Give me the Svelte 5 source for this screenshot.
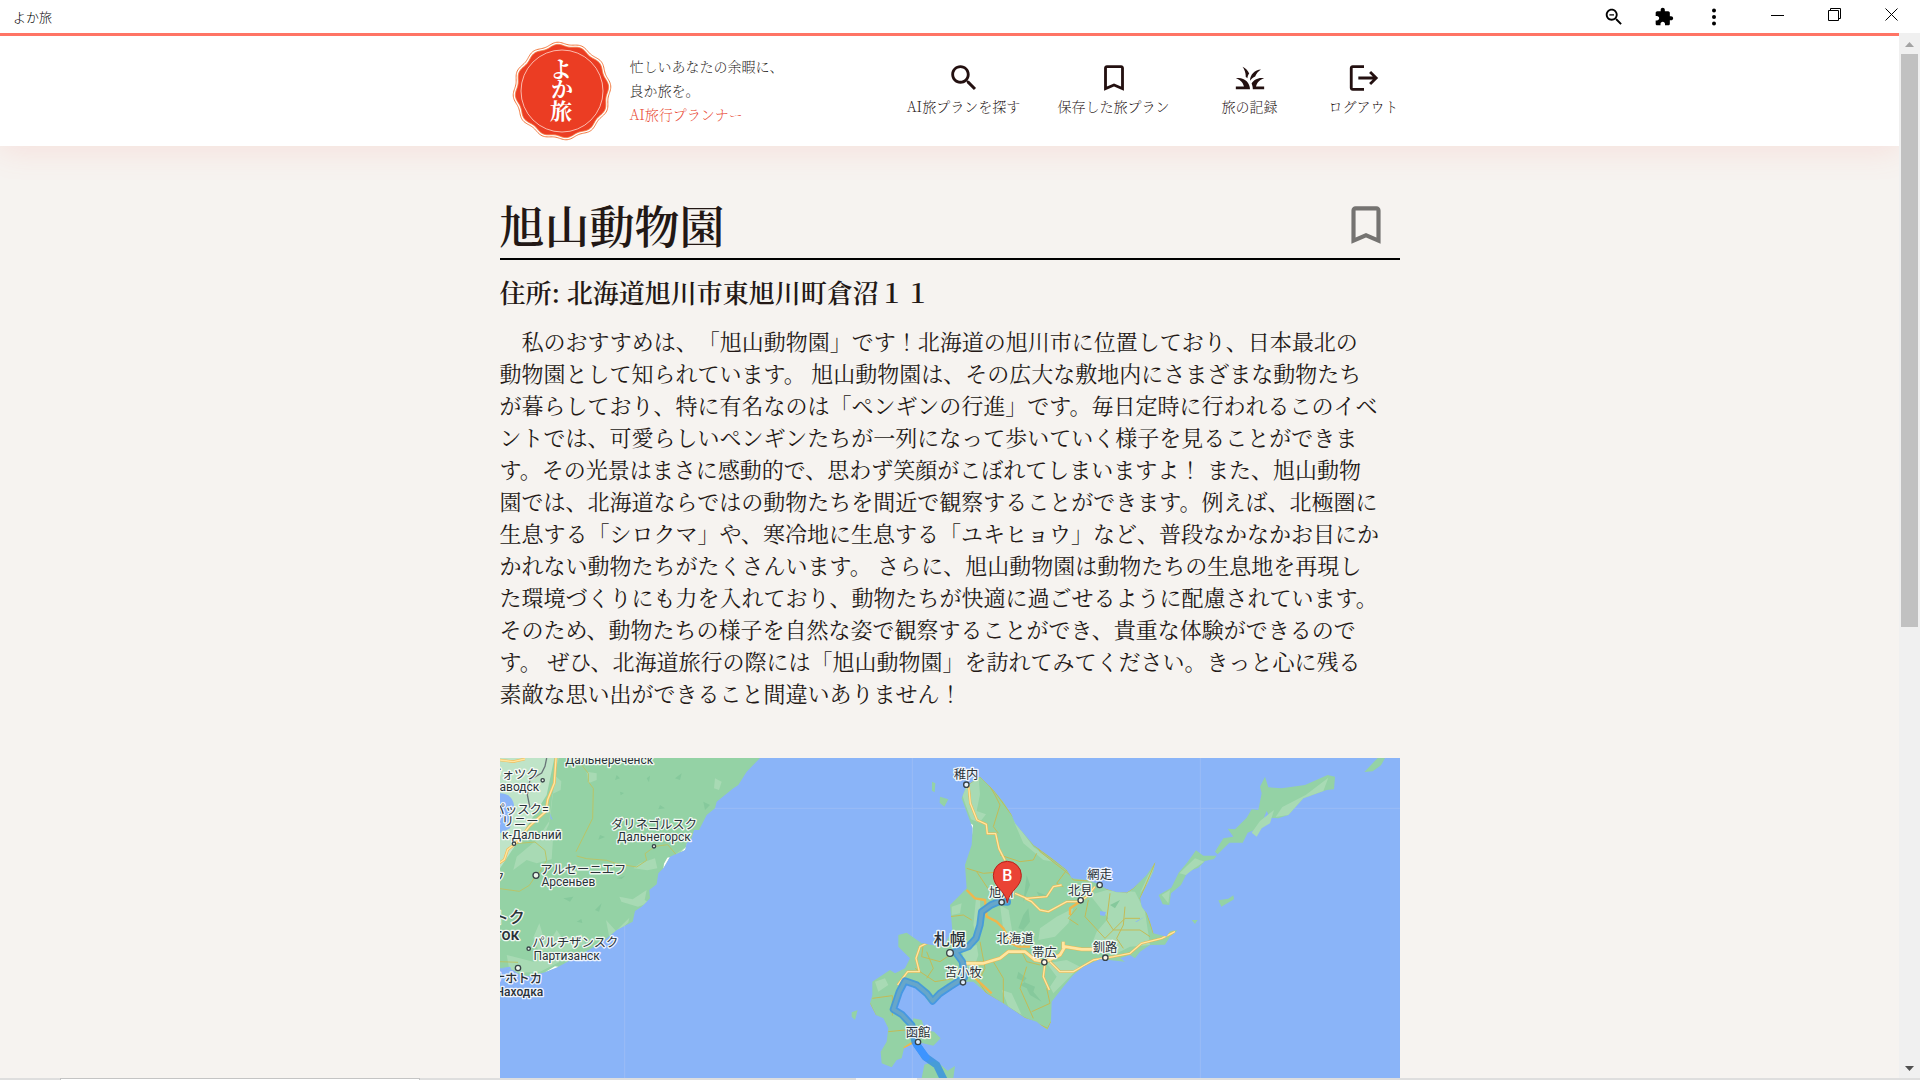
<script>
  const introduction = [
    '　私のおすすめは、「旭山動物園」です！北海道の旭川市に位置しており、日本最北の',
    '動物園として知られています。 旭山動物園は、その広大な敷地内にさまざまな動物たち',
    'が暮らしており、特に有名なのは「ペンギンの行進」です。毎日定時に行われるこのイベ',
    'ントでは、可愛らしいペンギンたちが一列になって歩いていく様子を見ることができま',
    'す。その光景はまさに感動的で、思わず笑顔がこぼれてしまいますよ！ また、旭山動物',
    '園では、北海道ならではの動物たちを間近で観察することができます。例えば、北極圏に',
    '生息する「シロクマ」や、寒冷地に生息する「ユキヒョウ」など、普段なかなかお目にか',
    'かれない動物たちがたくさんいます。 さらに、旭山動物園は動物たちの生息地を再現し',
    'た環境づくりにも力を入れており、動物たちが快適に過ごせるように配慮されています。',
    'そのため、動物たちの様子を自然な姿で観察することができ、貴重な体験ができるので',
    'す。 ぜひ、北海道旅行の際には「旭山動物園」を訪れてみてください。きっと心に残る',
    '素敵な思い出ができること間違いありません！'
  ].join('\n');

  const bookmark =
    'M17 3H7c-1.1 0-1.99.9-1.99 2L5 21l7-3 7 3V5c0-1.1-.9-2-2-2zm0 15l-5-2.18L7 18V5h10v13z';

  const links = [
    {
      label: 'AI旅プランを探す',
      icon: 'M15.5 14h-.79l-.28-.27C15.41 12.59 16 11.11 16 9.5 16 5.91 13.09 3 9.5 3S3 5.91 3 9.5 5.91 16 9.5 16c1.61 0 3.09-.59 4.23-1.57l.27.28v.79l5 4.99L20.49 19l-4.99-5zm-6 0C7.01 14 5 11.99 5 9.5S7.01 5 9.5 5 14 7.01 14 9.5 11.99 14 9.5 14z'
    },
    { label: '保存した旅プラン', icon: bookmark },
    {
      label: '旅の記録',
      icon: 'M12 20H2v-2h5.75C7.02 15.19 4.81 12.99 2 12.26C2.64 12.1 3.31 12 4 12C8.42 12 12 15.58 12 20z M22 12.26c-.64-.16-1.31-.26-2-.26c-2.93 0-5.48 1.58-6.88 3.93c.29.66.53 1.35.67 2.07c.13.65.2 1.32.2 2h8v-2h-5.75C16.98 15.19 19.19 12.99 22 12.26z M15.64 11.02c.78-2.09 2.23-3.84 4.09-5C15.44 6.16 12 9.67 12 14v.02C12.95 12.75 14.2 11.72 15.64 11.02z M11.42 8.85C10.58 6.66 8.88 4.89 6.7 4C8.14 5.86 9 8.18 9 10.71c0 .21-.03.41-.04.61c.43.24.83.52 1.22.82C10.24 10.98 10.68 9.82 11.42 8.85z'
    },
    {
      label: 'ログアウト',
      icon: 'M17 7l-1.41 1.41L18.17 11H8v2h10.17l-2.58 2.58L17 17l5-5zM4 5h8V3H4c-1.1 0-2 .9-2 2v14c0 1.1.9 2 2 2h8v-2H4V5z'
    }
  ];

  function scallop(radius, depth) {
    const points = [];
    for (let i = 0; i < 240; i++) {
      const a = (i / 240) * Math.PI * 2;
      const r = radius + depth * Math.cos(12 * (a + 1.68));
      points.push(`${(50 + r * Math.cos(a)).toFixed(2)} ${(50 + r * Math.sin(a)).toFixed(2)}`);
    }
    return 'M' + points.join('L') + 'Z';
  }

  const places = [
    { x: 328, y: 28, t: 'Дальнереченск', ru: true },
    { x: 116, y: 72, t: 'ヴォツク', end: true },
    { x: 118, y: 109, t: 'аводск', ru: true, end: true },
    { x: 146, y: 176, t: 'パッスク=', end: true },
    { x: 116, y: 214, t: 'ダリニー', end: true },
    { x: 185, y: 251, t: 'к-Дальний', ru: true, end: true },
    { x: 462, y: 222, t: 'ダリネゴルスク' },
    { x: 462, y: 259, t: 'Дальнегорск', ru: true },
    { x: 250, y: 356, t: 'アルセーニエフ' },
    { x: 205, y: 393, t: 'Арсеньев', ru: true },
    { x: 14, y: 380, t: 'ク', end: true },
    { x: 226, y: 577, t: 'パルチザンスク' },
    { x: 200, y: 614, t: 'Партизанск', ru: true },
    { x: 126, y: 685, t: 'ナホトカ', end: true, strong: true },
    { x: 130, y: 722, t: 'Находка', ru: true, end: true, strong: true },
    { x: 1398, y: 71, t: '稚内' },
    { x: 1799, y: 372, t: '網走' },
    { x: 1741, y: 419, t: '北見' },
    { x: 1504, y: 426, t: '旭川' },
    { x: 1545, y: 563, t: '北海道' },
    { x: 1633, y: 605, t: '帯広' },
    { x: 1815, y: 592, t: '釧路' },
    { x: 1390, y: 666, t: '苫小牧' },
    { x: 1254, y: 845, t: '函館' }
  ];

  const cities = [
    [128, 76, 5], [42, 266, 5], [462, 274, 5], [108, 361, 9], [86, 581, 5], [54, 639, 8],
    [1399, 89, 8], [1799, 390, 8], [1742, 436, 8], [1505, 442, 8], [1633, 622, 8],
    [1816, 608, 8], [1350, 594, 10], [1389, 682, 8], [1254, 861, 8]
  ];
</script>

<div class="window">
  <header class="titlebar">
    <span class="app-name">よか旅</span>
    <button class="tool" aria-label="縮小">
      <svg width="22" height="22" viewBox="0 0 24 24"><path d={links[0].icon} /><path d="M7 9h5v1.4H7z" /></svg>
    </button>
    <button class="tool" aria-label="拡張機能">
      <svg width="20" height="20" viewBox="0 0 24 24"><path d="M20.5 11H19V7c0-1.1-.9-2-2-2h-4V3.5C13 2.12 11.88 1 10.5 1S8 2.12 8 3.5V5H4c-1.1 0-1.99.9-1.99 2v3.8H3.5c1.49 0 2.7 1.21 2.7 2.7s-1.21 2.7-2.7 2.7H2V20c0 1.1.9 2 2 2h3.8v-1.5c0-1.49 1.21-2.7 2.7-2.7 1.49 0 2.7 1.21 2.7 2.7V22H17c1.1 0 2-.9 2-2v-4h1.5c1.38 0 2.5-1.12 2.5-2.5S21.88 11 20.5 11z" /></svg>
    </button>
    <button class="tool" aria-label="メニュー">
      <svg width="20" height="20" viewBox="0 0 20 20"><circle cx="10" cy="3.5" r="2" /><circle cx="10" cy="10" r="2" /><circle cx="10" cy="16.5" r="2" /></svg>
    </button>
    <span class="controls">
      <button class="control" aria-label="最小化">
        <svg width="14" height="14" viewBox="0 0 14 14"><path class="thin" d="M0 7.5h13" /></svg>
      </button>
      <button class="control" aria-label="元に戻す">
        <svg width="14" height="14" viewBox="0 0 14 14"><path class="thin" d="M.5 2.5h10v10H.5zM2.5 2.5V.5h10v10h-2" /></svg>
      </button>
      <button class="control" aria-label="閉じる">
        <svg width="14" height="14" viewBox="0 0 14 14"><path class="thin" d="M.5 .5l12 12M12.5 .5l-12 12" /></svg>
      </button>
    </span>
  </header>

  <div class="viewport">
    <div class="page">
      <div class="site-header">
        <div class="header-inner">
          <a class="brand" href="#top" aria-label="よか旅">
            <svg width="100" height="100" viewBox="0 0 100 100">
              <path d={scallop(47.8, 1.2)} fill="#fff" stroke="#f2793f" stroke-width="1" />
              <path d={scallop(45.6, 1.2)} fill="#eb3d23" stroke="#f2793f" stroke-width=".8" />
              <circle cx="50" cy="50" r="41" fill="none" stroke="#ffd9cf" stroke-width=".8" />
              <g class="seal">
                <text x="49" y="36">よ</text>
                <text x="50" y="56">か</text>
                <text x="49" y="78">旅</text>
              </g>
            </svg>
          </a>
          <p class="tagline">忙しいあなたの余暇に、<br />良か旅を。<br /><span>AI旅行プランナー</span></p>
          <nav>
            {#each links as link}
              <a href="#top">
                <svg width="34" height="34" viewBox="0 0 24 24"><path d={link.icon} /></svg>
                <span>{link.label}</span>
              </a>
            {/each}
          </nav>
        </div>
      </div>

      <main>
        <div class="heading">
          <h1>旭山動物園</h1>
          <button class="save" aria-label="保存">
            <svg width="50" height="50" viewBox="0 0 24 24"><path d={bookmark} /></svg>
          </button>
        </div>
        <h2>住所: 北海道旭川市東旭川町倉沼１１</h2>
        <p class="intro">{introduction}</p>

        <svg class="map" viewBox="0 9 2700 960" role="img" aria-label="旭山動物園までの地図">
          <defs>
            <clipPath id="mainland"><path d="M0 9H780L740 50 715 90 700 100 650 140 645 160 620 180 597 225H582L575 250 560 265 555 285 510 305 490 340 475 355 470 388 448 405 450 430 425 455 405 468 398 500 350 525 320 550 275 580 240 600 175 635 135 652 90 664 60 660 40 645 0 640Z" /></clipPath>
            <clipPath id="hokkaido"><path d="M1400 92 1440 65 1480 105 1510 140 1535 180 1545 205 1575 240 1600 270 1650 305 1700 345 1715 370 1760 375 1790 385 1820 403 1850 412 1880 413 1900 400 1940 360 1966 322 1960 350 1940 390 1920 430 1925 455 1940 475 1950 500 1960 535 2000 545 2010 528 2033 526 2010 545 1995 569 1950 570 1920 590 1905 610 1890 600 1860 610 1875 620 1800 612 1750 635 1720 660 1690 695 1655 740 1653 800 1642 825 1610 800 1575 788 1510 745 1460 715 1420 680 1390 680 1365 690 1320 720 1300 745 1285 740 1265 705 1225 685 1205 690 1190 720 1180 765 1215 790 1235 825 1240 790 1265 795 1275 825 1302 830 1322 850 1300 872 1250 860 1212 880 1205 910 1190 915 1175 937 1145 925 1142 890 1160 860 1165 820 1150 790 1128 780 1110 745 1117 720 1117 680 1170 645 1185 655 1215 640 1230 610 1195 575V540L1220 533 1265 565 1330 575 1357 525 1350 450 1375 425 1400 400 1395 330 1415 270 1418 220 1385 130Z" /></clipPath>
          </defs>
          <rect y="9" width="2700" height="960" fill="#8ab4f8" />
          <path d="M0 160H2700M374 9V969M1237 9V969M2101 9V969" stroke="#9bbcf6" stroke-width="3" />

          <g clip-path="url(#mainland)">
            <path d="M0 0H800V700H0Z" fill="#94d2a5" />
            <path d="M0 0H165L140 120 90 200 40 280 0 340Z" fill="#bfe4c8" />
            <g fill="#a8dab4">
              <path d="M165 9h12l-15 50 22 20-2 26-25 12-10 90-12 26 24 20-4 60-45 12-30-10-40 30 10-40 60-50 40-60 10-90z" />
              <path d="M260 50l30 5 0 20-25 10zM645 70l20 10-8 25-15-5zM530 295l22-15 0 12-30 18zM400 340l20-15 45-15 7 30-30 6zM358 425l40 8 42-28-6 30 14 8-34 12-50-15zM318 495l30 33 40-40-3 14-55 55zM118 505l12 40 25 5 15-25 15 22 45 0 15-10 10 30-50 20-90 0-15-40zM20 600l80 20 60-12 20 12-60 30-90 5z" />
            </g>
            <g fill="#86c99c">
              <path d="M350 60l10 10-15 5zM440 70l10-8-3 20zM525 70l20-15-5 20zM610 140l20 10-15 15zM480 150l15 10-20 3zM300 240l15 6-20 8zM190 430l30-5-10 15zM285 465l20-20-8 25zM350 370l25-8-10 10zM230 500l14-8 3 12zM360 110l12 4-10 7z" />
            </g>
            <path d="M0 115Q35 115 42 150L30 220 0 235Z" fill="#8ab4f8" />
            <path d="M140 9l-5 25-10 20-35 20-8 45 8 40" fill="none" stroke="#697579" stroke-width="4" />
            <path d="M245 30l20 25 0 25 15 20-2 90-30 60-20 40M45 266l60-5 30 25 5 30-30 50M230 303l30 8 60 5 30 10 60 10 30-20-5-20 30-22 38-5 30 35 50-30 50-80 30-30M108 361l-20 30-30 18-58-8M0 620l54 2" fill="none" stroke="#b9c468" stroke-width="3" />
            <path d="M0 15l40 5 35-8M168 9l-5 75-20 50-5 35-50 45-40 50-25 20-10 30-18 12" fill="none" stroke="#f3bd58" stroke-width="8" />
            <path d="M0 15l40 5 35-8M168 9l-5 75-20 50-5 35-50 45-40 50-25 20-10 30-18 12" fill="none" stroke="#ffe6a1" stroke-width="4" />
            <path d="M562 262l-4 22-20 12 20-20zM510 306l-20 36 2-16 10-18zM135 652l30-18 12 2 4 10-12-6z" fill="#fff" />
            <path d="M150 175l8 20-6-4zM0 640l30-5 10 20-40 10z" fill="#8ab4f8" />
          </g>

          <g clip-path="url(#hokkaido)">
            <path d="M1100 60H2050V950H1100Z" fill="#94d2a5" />
            <g fill="#a8dab4">
              <path d="M1380 100l20-12 36-20 4 50-10 50 28 10-20 25-25-10-15-40zM1540 195l60 80 60 45-30-5-60-50zM1428 430l12 0 2 70-14 40-8-30zM1500 450l26 15 10 60 20 40-20 10-25-40zM1620 520l50-35 50-25-15 45-40 40-50 10zM1770 420l50-15 85 5 30 60 15 100-60 5-50 25-70-20 20-50 35-40zM1640 625l60-10 40 20-80 80-10-20 20-30zM1385 580l45-10 5 30-10 30-30 10zM1505 705l30 10 30 65-40-25zM1125 680l30-10 10 20-30 20zM1355 455l30-10-5 30-25 5zM1945 360l20-30-20 55-25 30z" />
            </g>
            <g fill="#86c99c">
              <path d="M1555 650l25 20-10 10 35 15-5 15 25 30-35-20-10-20-20-10 15-10-25-10zM1580 360l10 30-20 50zM1570 480l15-20 5 40-20 25-15-5zM1610 410l40 15-30 5zM1830 450l30-15-15 25z" />
            </g>
            <path d="M1800 468l18 3-4 12-14-2zM1905 500l28-14-22 14z" fill="#8ab4f8" />
            <g fill="none" stroke="#c3bb56" stroke-width="3">
              <path d="M1400 92l40-27 40 40 55 75 65 90 100 75 20 30 80 5 20 23 60 10 20-13 66-78-46 108 20 45 20 60M1455 70l30 50 15 30-20 65 15 20M1500 300l60 20 40-5 10-20M1400 340l50 15 60-5 10-35M1530 330l0 80 15 15M1600 250l20 40 90 70M1700 345l-30 40 20 10M1765 435l-10 50 60 65 60-60 45 0M1830 415l-10 80 20 30 80 0 30 20M1875 455l-5 55-20 40 20 30M1730 460l-25 30 30 20M1560 580l20 40 40 10M1440 560l15 80-20 40 25 35M1480 620l30 50 0 75M1580 635l-20 65 40 90M1640 700l10 45-55 25M1350 485l40-5 25 15M1270 565l-5 40 55 15 30-20M1245 640l60 40 60-10M1280 590l20 50-20 30M1117 730l60-8 0 60M1165 830l50-5 40 25M1110 745l20 42M1430 350l40 60 40-15M1360 630l30 30 40 0M1653 800l-10 20-75-35-115-75" />
            </g>
            <g fill="none" stroke="#efb64d" stroke-linejoin="round">
              <path stroke-width="7" d="M1406 95l5 50 20 50 28 13 3 28h25l10 45 18 35M1545 415l35 15 60-5 20-30 25-5M1575 430l20 10 25 25 25 5 55-30h40l20-15 25-30M1710 480l0-20 30-20M1400 405l25 25 30 5 5 50 30 15 20 20 25 45 20 10 35 0M1340 575l-50-15-30 15-12 35 10 40-35 0-30 40M1635 625l-5 40 18 40M1650 620l30 30 40 0 60-35 60-10 50-10 35-30 60-15 40-20M1415 660l60 55M1212 880l28-18" />
              <path stroke-width="11" d="M1390 625l60 0 50-15 25-20 50 0 30 25 30 5 45-20 15-25 50 8 50 0M1690 580v-20" />
            </g>
            <g fill="none" stroke="#ffe6a1" stroke-linejoin="round">
              <path stroke-width="4" d="M1406 95l5 50 20 50 28 13 3 28h25l10 45 18 35M1545 415l35 15 60-5 20-30 25-5M1575 430l20 10 25 25 25 5 55-30h40l20-15 25-30M1340 575l-50-15-30 15-12 35 10 40-35 0-30 40M1635 625l-5 40 18 40M1650 620l30 30 40 0 60-35 60-10 50-10 35-30 60-15 40-20" />
              <path stroke-width="8" d="M1390 625l60 0 50-15 25-20 50 0 30 25 30 5 45-20 15-25 50 8 50 0M1690 580v-20" />
            </g>
            <path d="M1411 205l8 5-3 30-6-10z" fill="#fff" />
          </g>

          <g fill="#94d2a5">
            <path d="M1296 80l10 5-2 27-8-5zM1320 125l25 8-12 22-14-12zM1055 772l18-7-8 30-10-10zM1265 969l8-40 35-12 35 30 22-14-5 36z" />
            <path d="M2655 9h-22l-40 42 25-2 25-18zM2483 60l22 5-3 38-22 2-70 25-45 50-30 10-25-2-10-20-12 30-20 25-25 10-15 30-40 0-35 35-8-8 25-40 30-5-17-24 22 2 35-35 15-25 20 2 10-50-5-20 15-30 10 32 40 3 70-10zM2088 286l22 16 40 0-8 10-27 6-20 20-32 12-20 40-30 25-5 35-20-2-12-28 38-22 22-45 25-30zM2155 436l30-5 15-10 2 12-38 22zM2075 495h18l-8 12z" />
          </g>
          <g fill="#a8dab4">
            <path d="M2485 68l-15 40-60 22-45 50-38 6 20-30 70-36zM2322 165l-12 40-25 15-15 25-15-12 25-35zM2085 310l28 10-30 20-25 20-20-5zM2010 405l-5 40-20-25z" />
          </g>

          <g fill="none" stroke-linejoin="round" stroke-linecap="round">
            <path d="M1522 441 1497 440 1473 450 1445 470 1440 510 1428 550 1405 575 1365 590 1387 620 1393 668 1350 695 1320 715 1298 738 1280 715 1250 690 1215 678 1198 710 1180 763 1205 778 1235 810 1245 860 1275 905 1310 930 1332 975" stroke="#3993df" stroke-opacity=".85" stroke-width="22" />
            <path d="M1522 441 1497 440 1473 450 1445 470 1440 510 1428 550 1405 575 1365 590 1387 620 1393 668 1350 695 1320 715 1298 738 1280 715 1250 690 1215 678 1198 710 1180 763 1205 778 1235 810" stroke="#67a6c9" stroke-width="11" />
            <path d="M1250 869 1278 907" stroke="#3d94ff" stroke-width="22" />
          </g>

          {#each places as place}
            <text x={place.x} y={place.y} class:ru={place.ru} class:end={place.end} class:strong={place.strong}>{place.t}</text>
          {/each}
          <text class="city end" x="74" y="504">ストク</text>
          <text class="city end" x="58" y="555">ток</text>
          <text class="city" x="1349" y="571">札幌</text>
          {#each cities as [x, y, r]}
            <circle cx={x} cy={y} {r} fill="#fff" fill-opacity=".8" stroke="#384247" stroke-width="4" />
          {/each}
          <path d="M1522 443C1516 405 1480 398 1480 361A42 42 0 0 1 1564 361C1564 398 1528 405 1522 443Z" fill="#ea4335" stroke="#b9201a" stroke-width="3" />
          <text class="pin" x="1522" y="379">B</text>
        </svg>
      </main>
    </div>
    <div class="scrollbar" aria-hidden="true">
      <svg width="9" height="5" viewBox="0 0 9 5"><path d="M0 5L4.5 0 9 5z" fill="#a3a3a3" /></svg>
      <div class="track"><div class="thumb"></div></div>
      <svg width="9" height="5" viewBox="0 0 9 5"><path d="M0 0L4.5 5 9 0z" fill="#505050" /></svg>
    </div>
  </div>
  <div class="desktop-edge"><i></i><b></b></div>
</div>

<style>
  :global(body) {
    margin: 0;
    overflow: hidden;
  }
  .window {
    height: 100vh;
    display: flex;
    flex-direction: column;
    background: #f6f3f0;
    color: #231815;
    font-family: 'Noto Serif CJK JP', 'Noto Serif JP', 'Liberation Serif', 'Noto Sans CJK JP', serif;
    text-spacing-trim: space-all;
  }
  button {
    display: flex;
    align-items: center;
    justify-content: center;
    padding: 0;
    border: 0;
    background: none;
    color: inherit;
    cursor: pointer;
  }
  svg {
    display: block;
    flex: none;
    fill: currentColor;
  }
  .titlebar {
    flex: none;
    display: flex;
    align-items: center;
    height: 33px;
    background: #fff;
    color: #000;
  }
  .app-name {
    flex: 1;
    padding-left: 13px;
    font: 300 13px/20px 'Noto Sans CJK JP', sans-serif;
  }
  .tool {
    width: 50px;
    height: 32px;
  }
  .controls {
    display: flex;
    align-self: flex-start;
    margin-left: 10px;
  }
  .control {
    width: 57px;
    height: 29px;
  }
  .thin {
    fill: none;
    stroke: #000;
  }
  .viewport {
    flex: 1;
    min-height: 0;
    display: flex;
  }
  .page {
    flex: 1;
    min-width: 0;
    overflow: hidden;
  }
  .site-header {
    border-top: 3px solid #ff7465;
    background: #fff;
    box-shadow: 0 4px 30px rgba(255, 116, 101, 0.15);
  }
  .header-inner {
    display: flex;
    align-items: center;
    max-width: 900px;
    height: 110px;
    margin: 0 auto;
  }
  .brand {
    margin-left: 12px;
  }
  .seal text {
    fill: #fff;
    stroke: none;
    font: 700 22px 'Noto Serif CJK JP', 'Noto Sans CJK JP', serif;
    text-anchor: middle;
  }
  .tagline {
    flex: 1;
    margin: 0 0 2px 18px;
    font-size: 14px;
    line-height: 24px;
    font-weight: 200;
  }
  .tagline span {
    color: #e8442c;
  }
  nav {
    display: grid;
    grid-template-columns: 118px 116px 90px 72px;
    gap: 33px;
    margin-bottom: 4px;
  }
  nav a {
    display: flex;
    flex-direction: column;
    align-items: center;
    color: #231010;
    font-size: 14px;
    line-height: 22px;
    font-weight: 200;
    text-decoration: none;
    white-space: nowrap;
  }
  main {
    max-width: 900px;
    margin: 0 auto;
    padding-top: 48px;
  }
  .heading {
    display: flex;
    align-items: center;
    justify-content: space-between;
    height: 64px;
    border-bottom: 2px solid #000;
  }
  h1 {
    margin: 0;
    font-size: 45px;
    line-height: 62px;
    font-weight: 600;
  }
  .save {
    margin-right: 9px;
    height: 62px;
    color: #757371;
  }
  .heading > * {
    align-self: flex-start;
  }
  h2 {
    margin: 13px 0 0;
    font-size: 26px;
    line-height: 38px;
    font-weight: 600;
  }
  .intro {
    margin: 14px 0 49px;
    font-size: 22px;
    line-height: 32px;
    white-space: pre;
  }
  .map {
    width: 100%;
    height: auto;
  }
  .map text {
    font: 37px Roboto, 'Noto Sans CJK JP', sans-serif;
    fill: #2a3238;
    stroke: #fff;
    stroke-opacity: 0.85;
    stroke-width: 8px;
    stroke-linejoin: round;
    paint-order: stroke;
    text-anchor: middle;
  }
  .map .ru {
    font-size: 36px;
  }
  .map .end {
    text-anchor: end;
  }
  .map .strong {
    font-weight: 500;
  }
  .map .city {
    font-size: 48px;
    font-weight: 500;
  }
  .map .pin {
    font-size: 48px;
    font-weight: 500;
    fill: #fff;
    stroke: none;
  }
  .scrollbar {
    flex: none;
    display: flex;
    flex-direction: column;
    align-items: center;
    box-sizing: border-box;
    width: 21px;
    padding: 9px 0 7px;
    background: #f0f0f0;
  }
  .track {
    flex: 1;
    width: 17px;
    margin: 7px 0;
  }
  .thumb {
    height: 57%;
    background: #c1c1c1;
  }
  .desktop-edge {
    flex: none;
    display: flex;
    height: 2px;
    background: #dedede;
  }
  .desktop-edge i {
    width: 358px;
    margin-left: 60px;
    border: 1px solid #c4c4c4;
    border-bottom: 0;
    background: #fff;
  }
  .desktop-edge b {
    width: 61px;
    margin-left: 436px;
    background: #f5f5f5;
  }
</style>
